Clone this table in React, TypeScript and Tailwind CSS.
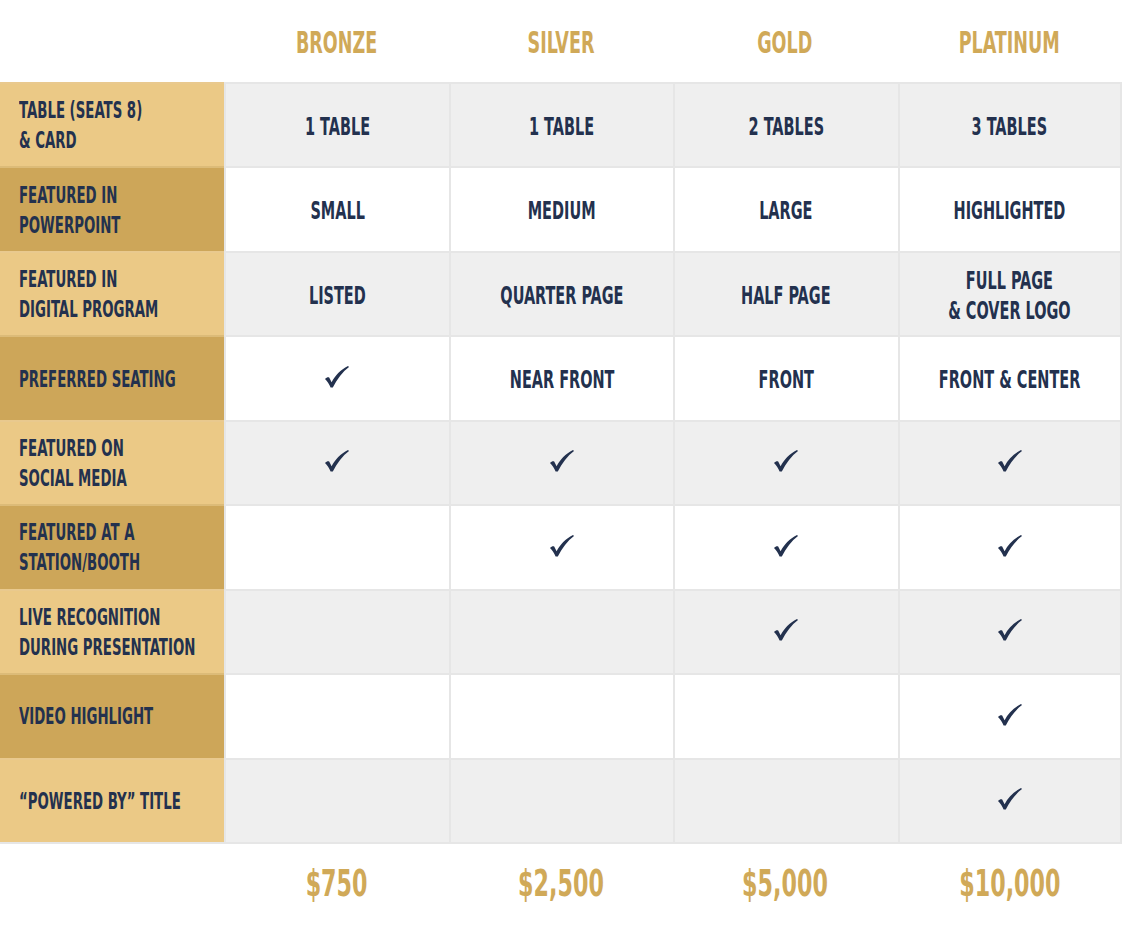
import React from 'react';

type Cell = string | boolean;

interface Row {
  label: string[];
  cells: Cell[];
}

const tiers = ['BRONZE', 'SILVER', 'GOLD', 'PLATINUM'];
const prices = ['$750', '$2,500', '$5,000', '$10,000'];

const rows: Row[] = [
  { label: ['TABLE (SEATS 8)', '& CARD'], cells: ['1 TABLE', '1 TABLE', '2 TABLES', '3 TABLES'] },
  { label: ['FEATURED IN', 'POWERPOINT'], cells: ['SMALL', 'MEDIUM', 'LARGE', 'HIGHLIGHTED'] },
  { label: ['FEATURED IN', 'DIGITAL PROGRAM'], cells: ['LISTED', 'QUARTER PAGE', 'HALF PAGE', 'FULL PAGE\n& COVER LOGO'] },
  { label: ['PREFERRED SEATING'], cells: [true, 'NEAR FRONT', 'FRONT', 'FRONT & CENTER'] },
  { label: ['FEATURED ON', 'SOCIAL MEDIA'], cells: [true, true, true, true] },
  { label: ['FEATURED AT A', 'STATION/BOOTH'], cells: [false, true, true, true] },
  { label: ['LIVE RECOGNITION', 'DURING PRESENTATION'], cells: [false, false, true, true] },
  { label: ['VIDEO HIGHLIGHT'], cells: [false, false, false, true] },
  { label: ['\u201CPOWERED BY\u201D TITLE'], cells: [false, false, false, true] },
];

function Check() {
  return (
    <svg width="24" height="22" viewBox="0 0 24 22" className="-mt-[3px]">
      <path
        d="M0 13 C1.5 11.5 3 11 4.2 11.6 L6.6 16.2 C10 9.5 15.5 3.8 23 0 L24 1 C17.5 6 12 13 7.8 21.6 L5.6 21.6 C4.2 18 2.2 15 0 13 Z"
        fill="#23314e"
      />
    </svg>
  );
}

export default function App() {
  return (
    <div className="w-[1125px] h-[935px] bg-white font-['DejaVu_Sans_Condensed','DejaVu_Sans',sans-serif] font-bold text-[#23314e]">
      {/* tier header */}
      <div className="grid grid-cols-[224px_repeat(4,224.5px)] h-[82px]">
        <div />
        {tiers.map((t) => (
          <div key={t} className="flex items-center justify-center pt-[2px] text-[#d0a958] text-[31px] leading-none">
            <span className="inline-block scale-x-[0.63]">{t}</span>
          </div>
        ))}
      </div>

      {rows.map((row, i) => {
        const odd = i % 2 === 0;
        const last = i === rows.length - 1;
        return (
          <div
            key={i}
            className={
              'grid grid-cols-[224px_repeat(4,224.5px)] ' +
              (last ? 'h-[86.45px]' : 'h-[84.45px]')
            }
          >
            <div
              className={
                'flex items-center pl-[19px] border-t-2 text-[23.5px] leading-[30px] ' +
                (odd ? 'bg-[#ebc986] border-[#e9c98e] ' : 'bg-[#cda659] border-[#dcbb78] ') +
                (last ? 'border-b-2 border-b-[#e6e6e6]' : '')
              }
            >
              <span className="inline-block origin-left scale-x-[0.63] whitespace-nowrap">
                {row.label.map((l, j) => (
                  <span key={j} className="block">{l}</span>
                ))}
              </span>
            </div>
            {row.cells.map((c, j) => (
              <div
                key={j}
                className={
                  'flex items-center justify-center text-center border-t-2 border-l-2 border-[#e6e6e6] text-[24px] leading-[30px] ' +
                  (odd ? 'bg-[#efefef] ' : 'bg-white ') +
                  (j === 3 ? 'border-r-2 ' : '') +
                  (last ? 'border-b-2' : '')
                }
              >
                {c === true ? (
                  <Check />
                ) : c ? (
                  <span className="inline-block pt-[3px] scale-x-[0.67] whitespace-pre-line">{c}</span>
                ) : null}
              </div>
            ))}
          </div>
        );
      })}

      {/* prices */}
      <div className="grid grid-cols-[224px_repeat(4,224.5px)] h-[91px]">
        <div />
        {prices.map((p) => (
          <div key={p} className="flex items-center justify-center pb-[12px] text-[#d0a958] text-[38px] leading-none">
            <span className="inline-block scale-x-[0.65]">{p}</span>
          </div>
        ))}
      </div>
    </div>
  );
}
